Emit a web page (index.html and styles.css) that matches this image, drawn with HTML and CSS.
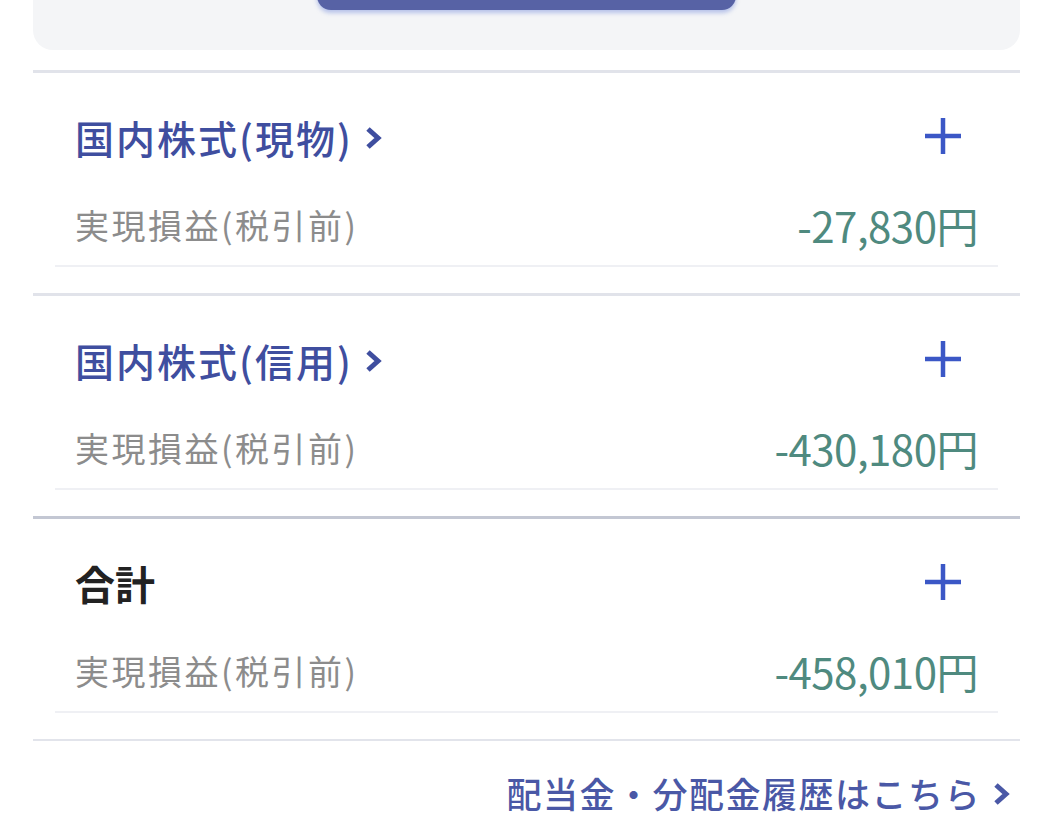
FILE: index.html
```html
<!DOCTYPE html>
<html lang="ja">
<head>
<meta charset="utf-8">
<link rel="stylesheet" href="styles.css">
</head>
<body>
<div class="page">
  <div class="card">
    <div class="card-button"></div>
  </div>
  <div class="divider"></div>

  <section class="section">
    <div class="head">
      <a class="title link-title">国内株式(現物)<svg class="chev" viewBox="0 0 17 26" width="17" height="26"><polyline points="3,4 13,13 3,22" fill="none" stroke="currentColor" stroke-width="5"/></svg></a>
      <svg class="plus" viewBox="0 0 38 38" width="38" height="38"><path d="M19 1V37M1 19H37" stroke="currentColor" stroke-width="4.5"/></svg>
    </div>
    <div class="row">
      <span class="label">実現損益(税引前)</span>
      <span class="value">-27,830円</span>
    </div>
  </section>
  <div class="divider"></div>

  <section class="section">
    <div class="head">
      <a class="title link-title">国内株式(信用)<svg class="chev" viewBox="0 0 17 26" width="17" height="26"><polyline points="3,4 13,13 3,22" fill="none" stroke="currentColor" stroke-width="5"/></svg></a>
      <svg class="plus" viewBox="0 0 38 38" width="38" height="38"><path d="M19 1V37M1 19H37" stroke="currentColor" stroke-width="4.5"/></svg>
    </div>
    <div class="row">
      <span class="label">実現損益(税引前)</span>
      <span class="value">-430,180円</span>
    </div>
  </section>
  <div class="divider dark"></div>

  <section class="section">
    <div class="head">
      <span class="title total">合計</span>
      <svg class="plus" viewBox="0 0 38 38" width="38" height="38"><path d="M19 1V37M1 19H37" stroke="currentColor" stroke-width="4.5"/></svg>
    </div>
    <div class="row">
      <span class="label">実現損益(税引前)</span>
      <span class="value">-458,010円</span>
    </div>
  </section>
  <div class="divider light"></div>

  <div class="footer">
    <a class="more">配当金・分配金履歴はこちら<svg class="chev" viewBox="0 0 17 26" width="17" height="26"><polyline points="3,4 13,13 3,22" fill="none" stroke="currentColor" stroke-width="5"/></svg></a>
  </div>
</div>
</body>
</html>
```
FILE: styles.css
```css
html, body {
  margin: 0;
  padding: 0;
  background: #ffffff;
  font-family: "Noto Sans CJK JP", "Noto Sans", sans-serif;
  overflow: hidden;
}

.page {
  margin: 0 30px 0 33px;
  width: 987px;
}

.card {
  margin-top: -80px;
  height: 130px;
  background: #f4f5f7;
  border-radius: 20px;
  display: flex;
  justify-content: center;
}

.card-button {
  width: 419px;
  height: 90px;
  background: #5762a5;
  border-radius: 0 0 14px 14px;
  box-shadow: 0 3px 4px rgba(70, 100, 210, 0.35);
}

.divider {
  margin-top: 20px;
  height: 3px;
  background: #e1e3ea;
}

.section + .divider {
  margin-top: 0;
}

.divider.dark {
  background: #c3c7d3;
}

.divider.light {
  height: 2px;
  background: #e2e4eb;
}

.section {
  padding: 34px 22px 26px;
}

.head {
  height: 60px;
  display: flex;
  align-items: center;
  justify-content: space-between;
  padding: 0 36px 0 20px;
}

.title {
  font-size: 39px;
  line-height: 60px;
  display: flex;
  align-items: center;
}

.link-title {
  color: #3f4e9f;
  font-weight: 500;
  letter-spacing: 2px;
}

.total {
  color: #222222;
  font-weight: 700;
  font-size: 40px;
}

.chev {
  margin-left: 12px;
  margin-top: 2px;
}

.plus {
  color: #3b57c6;
  margin-top: -2px;
}

.row {
  margin-top: 33px;
  height: 50px;
  padding: 0 20px 15px 20px;
  border-bottom: 2px solid #eff0f4;
  display: flex;
  align-items: center;
  justify-content: space-between;
}

.label {
  color: #8c8c8c;
  font-size: 34px;
  line-height: 50px;
  letter-spacing: 2.5px;
}

.value {
  color: #4f8a7f;
  font-size: 42px;
  line-height: 50px;
  letter-spacing: -0.5px;
}

.footer {
  margin-top: 27px;
  display: flex;
  justify-content: flex-end;
  padding-right: 10px;
}

.more {
  color: #4a58a6;
  font-size: 35px;
  font-weight: 500;
  line-height: 50px;
  letter-spacing: 1.5px;
  display: flex;
  align-items: center;
}
```
